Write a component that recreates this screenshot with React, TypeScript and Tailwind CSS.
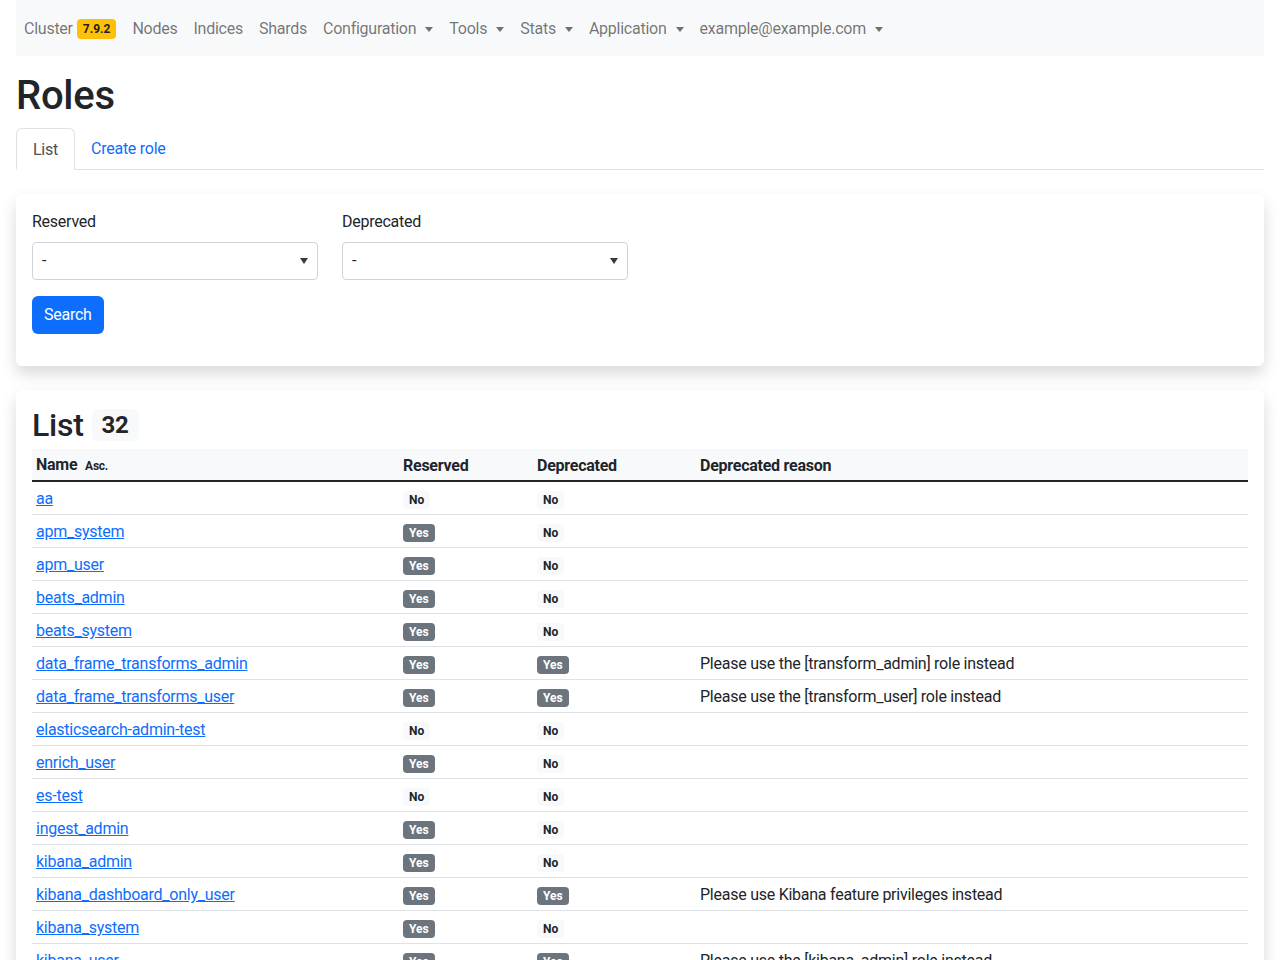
import React from "react";

type Role = { name: string; reserved: boolean; deprecated: boolean; reason?: string };

const roles: Role[] = [
  { name: "aa", reserved: false, deprecated: false },
  { name: "apm_system", reserved: true, deprecated: false },
  { name: "apm_user", reserved: true, deprecated: false },
  { name: "beats_admin", reserved: true, deprecated: false },
  { name: "beats_system", reserved: true, deprecated: false },
  { name: "data_frame_transforms_admin", reserved: true, deprecated: true, reason: "Please use the [transform_admin] role instead" },
  { name: "data_frame_transforms_user", reserved: true, deprecated: true, reason: "Please use the [transform_user] role instead" },
  { name: "elasticsearch-admin-test", reserved: false, deprecated: false },
  { name: "enrich_user", reserved: true, deprecated: false },
  { name: "es-test", reserved: false, deprecated: false },
  { name: "ingest_admin", reserved: true, deprecated: false },
  { name: "kibana_admin", reserved: true, deprecated: false },
  { name: "kibana_dashboard_only_user", reserved: true, deprecated: true, reason: "Please use Kibana feature privileges instead" },
  { name: "kibana_system", reserved: true, deprecated: false },
  { name: "kibana_user", reserved: true, deprecated: true, reason: "Please use the [kibana_admin] role instead" },
  { name: "logstash_admin", reserved: true, deprecated: false },
  { name: "logstash_system", reserved: true, deprecated: false },
  { name: "machine_learning_admin", reserved: true, deprecated: false },
];

const Caret = () => (
  <span className="ml-[9px] inline-block border-x-[4px] border-t-[5px] border-x-transparent border-t-current" />
);

const YesNo = ({ value }: { value: boolean }) =>
  value ? (
    <span className="inline-block rounded-[4px] bg-[#6c757d] px-[6px] py-[3px] text-[12px] font-bold leading-none tracking-normal text-white">Yes</span>
  ) : (
    <span className="inline-block rounded-[4px] bg-[#f8f9fa] px-[6px] py-[3px] text-[12px] font-bold leading-none tracking-normal text-[#212529]">No</span>
  );

const Select = ({ label }: { label: string }) => (
  <div className="w-[286px]">
    <div className="mb-2 leading-6">{label}</div>
    <div className="flex h-[38px] items-center justify-between rounded-[4px] border border-[#ced4da] bg-white pl-[9px] pr-[9px]">
      <span>-</span>
      <span className="border-x-[4px] border-t-[6px] border-x-transparent border-t-[#343a40]" />
    </div>
  </div>
);

export default function App() {
  const navItems = [
    { label: "Nodes" },
    { label: "Indices" },
    { label: "Shards" },
    { label: "Configuration", caret: true },
    { label: "Tools", caret: true },
    { label: "Stats", caret: true },
    { label: "Application", caret: true },
    { label: "example@example.com", caret: true },
  ];

  return (
    <div className="min-h-screen bg-white px-4 font-['Roboto','Liberation_Sans',sans-serif] text-[16px] tracking-[-0.25px] text-[#212529]">
      <nav className="flex h-14 items-center bg-[#f8f9fa] px-2 pt-[2px] text-[rgba(0,0,0,0.55)]">
        <span className="flex items-center pr-2">
          Cluster
          <span className="ml-[4px] rounded-[4px] bg-[#ffc107] px-[6px] py-[4px] text-[12px] font-bold leading-none tracking-normal text-[#212529]">7.9.2</span>
        </span>
        {navItems.map((item) => (
          <span key={item.label} className="flex items-center px-2">
            {item.label}
            {item.caret && <Caret />}
          </span>
        ))}
      </nav>

      <h1 className="mb-2 mt-4 text-[40px] font-medium leading-[1.2]">Roles</h1>

      <div className="flex border-b border-[#dee2e6]">
        <span className="-mb-px rounded-t-[6px] border border-[#dee2e6] border-b-white bg-white px-4 pb-[7px] pt-[9px] text-[#495057]">List</span>
        <span className="px-4 pb-[7px] pt-[9px] text-[#0d6efd]">Create role</span>
      </div>

      <div className="mt-6 rounded-[6px] bg-white p-4 shadow-[0_0.5rem_1rem_rgba(0,0,0,0.15)]">
        <div className="flex gap-6">
          <Select label="Reserved" />
          <Select label="Deprecated" />
        </div>
        <button className="mb-4 mt-4 h-[38px] rounded-[6px] bg-[#0d6efd] px-3 text-white">Search</button>
      </div>

      <div className="mt-6 rounded-[6px] bg-white p-4 shadow-[0_0.5rem_1rem_rgba(0,0,0,0.15)]">
        <h2 className="mb-[5px] flex items-center text-[32px] font-medium leading-[1.2]">
          List
          <span className="ml-2 rounded-[6px] bg-[#f8f9fa] px-[10px] py-[4px] text-[24px] font-bold leading-none">32</span>
        </h2>
        <table className="w-full border-collapse text-left">
          <thead>
            <tr className="border-b-2 border-[#212529] bg-[#f8f9fa]">
              <th className="w-[367px] px-1 pb-[2px] pt-[4px] font-bold leading-6">
                Name <span className="ml-1 text-[12px] font-bold">Asc.</span>
              </th>
              <th className="w-[134px] px-1 pb-[2px] pt-[4px] font-bold">Reserved</th>
              <th className="w-[163px] px-1 pb-[2px] pt-[4px] font-bold">Deprecated</th>
              <th className="px-1 pb-[2px] pt-[4px] font-bold">Deprecated reason</th>
            </tr>
          </thead>
          <tbody>
            {roles.map((r) => (
              <tr key={r.name} className="border-b border-[#dee2e6]">
                <td className="px-1 pb-[3px] pt-[5px] leading-6">
                  <a href="#" className="text-[#0d6efd] underline">{r.name}</a>
                </td>
                <td className="px-1 pb-[3px] pt-[5px]"><YesNo value={r.reserved} /></td>
                <td className="px-1 pb-[3px] pt-[5px]"><YesNo value={r.deprecated} /></td>
                <td className="px-1 pb-[3px] pt-[5px]">{r.reason ?? ""}</td>
              </tr>
            ))}
          </tbody>
        </table>
      </div>
    </div>
  );
}
